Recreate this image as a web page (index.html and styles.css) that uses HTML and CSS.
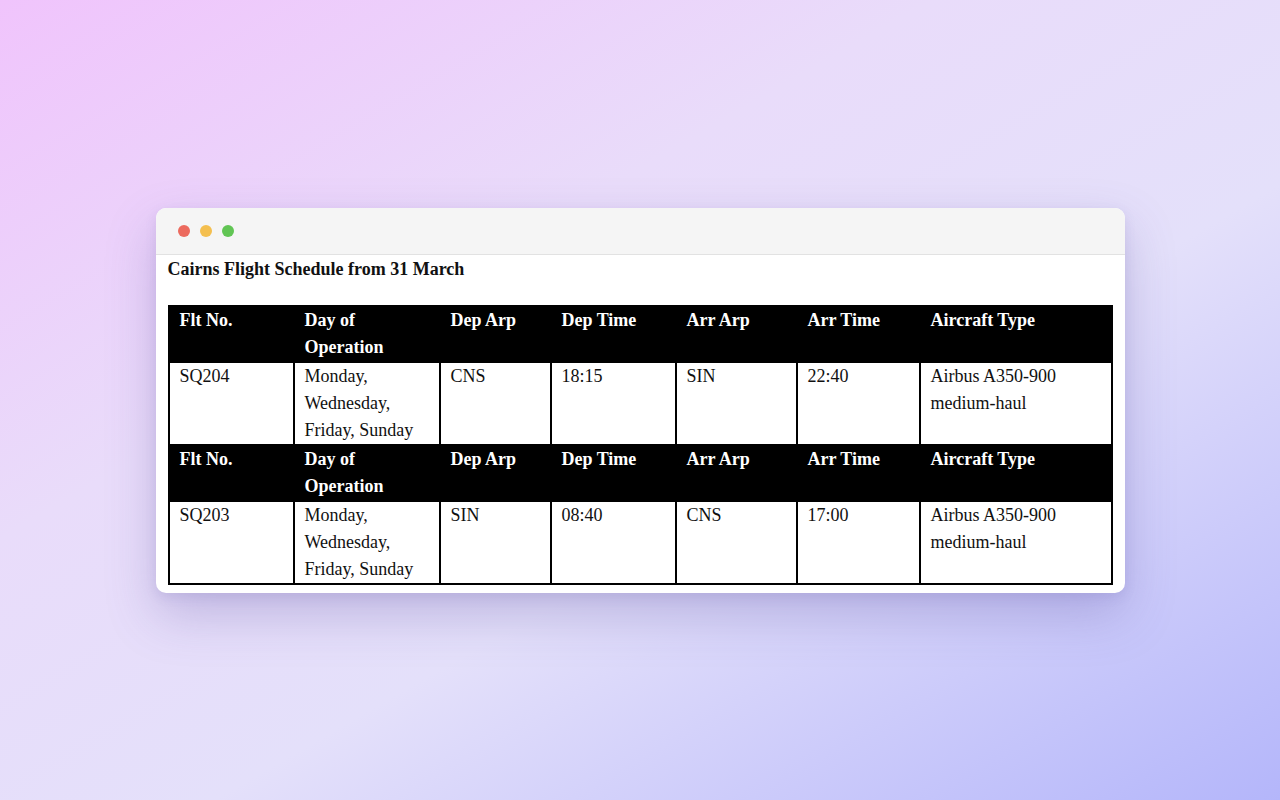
FILE: index.html
```html
<!DOCTYPE html>
<html lang="en">
<head>
<meta charset="utf-8">
<title>Cairns Flight Schedule</title>
<link rel="stylesheet" href="styles.css">
</head>
<body>
<div class="stage">
  <div class="window">
    <div class="titlebar">
      <span class="dot red"></span>
      <span class="dot yellow"></span>
      <span class="dot green"></span>
    </div>
    <div class="content">
      <h1 class="title">Cairns Flight Schedule from 31 March</h1>
      <table class="schedule">
        <colgroup>
          <col class="c1"><col class="c2"><col class="c3"><col class="c4"><col class="c5"><col class="c6"><col class="c7">
        </colgroup>
        <tbody>
          <tr class="head">
            <th>Flt No.</th><th>Day of Operation</th><th>Dep Arp</th><th>Dep Time</th><th>Arr Arp</th><th>Arr Time</th><th>Aircraft Type</th>
          </tr>
          <tr>
            <td>SQ204</td><td>Monday, Wednesday, Friday, Sunday</td><td>CNS</td><td>18:15</td><td>SIN</td><td>22:40</td><td>Airbus A350-900 medium-haul</td>
          </tr>
          <tr class="head">
            <th>Flt No.</th><th>Day of Operation</th><th>Dep Arp</th><th>Dep Time</th><th>Arr Arp</th><th>Arr Time</th><th>Aircraft Type</th>
          </tr>
          <tr>
            <td>SQ203</td><td>Monday, Wednesday, Friday, Sunday</td><td>SIN</td><td>08:40</td><td>CNS</td><td>17:00</td><td>Airbus A350-900 medium-haul</td>
          </tr>
        </tbody>
      </table>
    </div>
  </div>
</div>
</body>
</html>
```
FILE: styles.css
```css
html, body {
  margin: 0;
  padding: 0;
}
body {
  width: 1280px;
  height: 800px;
  overflow: hidden;
  background: linear-gradient(150deg, #f0c4fc 0%, #e9dcfa 35%, #e4e0fa 60%, #b4b6fa 100%);
  font-family: "Liberation Serif", "Times New Roman", serif;
  color: #111;
}
.stage {
  width: 1280px;
  height: 800px;
  display: flex;
  align-items: center;
  justify-content: center;
}
.window {
  width: 969px;
  background: #fff;
  border-radius: 10px;
  overflow: hidden;
  box-shadow: 0 22px 50px rgba(90, 80, 160, 0.28), 0 4px 12px rgba(90, 80, 160, 0.12);
}
.titlebar {
  height: 47px;
  background: #f5f5f5;
  border-bottom: 1px solid #e2e2e2;
  display: flex;
  align-items: center;
  gap: 10px;
  padding-left: 22px;
  box-sizing: border-box;
}
.dot {
  width: 12px;
  height: 12px;
  border-radius: 50%;
  display: block;
}
.red { background: #ec6a5e; }
.yellow { background: #f4bf4f; }
.green { background: #61c554; }
.content {
  padding: 1px 13px 8px 12px;
}
.title {
  margin: 0 0 22px 0;
  font-size: 18px;
  line-height: 27px;
  font-weight: bold;
}
.schedule {
  width: 943px;
  table-layout: fixed;
  border-collapse: collapse;
  font-size: 18px;
  line-height: 27px;
}
.c1 { width: 125px; }
.c2 { width: 146px; }
.c3 { width: 111px; }
.c4 { width: 125px; }
.c5 { width: 121px; }
.c6 { width: 123px; }
.c7 { width: 192px; }
.schedule th,
.schedule td {
  border: 2px solid #000;
  padding: 0 10px;
  text-align: left;
  vertical-align: top;
}
.schedule th {
  background: #000;
  color: #fff;
  font-weight: bold;
}
.schedule td {
  color: #111;
}
```
